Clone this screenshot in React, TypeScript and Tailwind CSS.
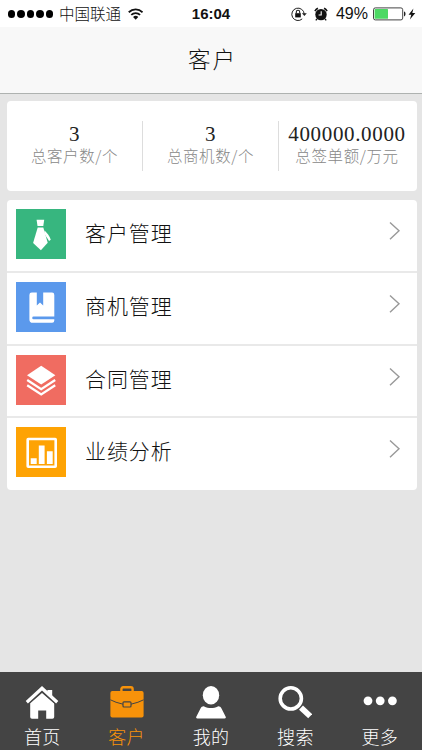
import type { ReactNode } from "react";

const TieIcon = () => (
  <svg viewBox="0 0 50 50" className="size-full" fill="#fff">
    <path d="M20.6 10.7h7.6l-.9 6.4h-5.8z" />
    <path d="M21.7 18.4h5.6l4.4 15.4-6.8 7.5-7.8-7.3z" />
    <path d="M28.6 21.5c2.4 2.4 5 5.5 6.2 9.3l-1.8 1.3c-1.4-3-3.4-4.5-4.8-8.3z" />
  </svg>
);

const BookIcon = () => (
  <svg viewBox="0 0 50 50" className="size-full" fill="#fff">
    <path d="M15.8 10.6h5v12.8l3.2-2.8 3.2 2.8V10.6h8.8a2.3 2.3 0 0 1 2.3 2.3v21.6H17.6a1.4 1.4 0 0 0 0 2.8h20.7v1.3a2.2 2.2 0 0 1-2.2 2.2H16.8a3.4 3.4 0 0 1-3.4-3.4V13a2.4 2.4 0 0 1 2.4-2.4z" />
  </svg>
);

const LayersIcon = () => (
  <svg viewBox="0 0 50 50" className="size-full">
    <path d="M25.2 10.7l14.2 9.5-14.2 9.3L11 20.2z" fill="#fff" />
    <path
      d="M11.2 25l14 9.2 14-9.2M11.2 30.2l14 9.2 14-9.2"
      fill="none"
      stroke="#fff"
      strokeWidth="2.3"
    />
  </svg>
);

const ChartIcon = () => (
  <svg viewBox="0 0 50 50" className="size-full">
    <rect x="11.7" y="12" width="28" height="27.8" rx=".5" fill="none" stroke="#fff" strokeWidth="2.6" />
    <path d="M14.7 31.2h6v5.8h-6zM22.8 18.4h5.8V37h-5.8zM30.9 24.2h5.8V37h-5.8z" fill="#fff" />
  </svg>
);

const HomeIcon = () => (
  <svg viewBox="0 0 34 34" className="size-[34px]">
    <path
      d="M5.2 17.3L17 7l12.2 10.4V31a1.8 1.8 0 0 1-1.8 1.8h-6.2v-8.4h-8v8.4H7A1.8 1.8 0 0 1 5.2 31z"
      fill="#fff"
    />
    <path d="M1.7 16.5L17 2.5l15.3 14" fill="none" stroke="#444" strokeWidth="5.4" />
    <path d="M22.4 4h4.8v7l-4.8-4z" fill="#fff" />
    <path d="M1.8 16.3L17 2.3l15.2 14" fill="none" stroke="#fff" strokeWidth="3.2" />
  </svg>
);

const BriefcaseIcon = () => (
  <svg viewBox="0 0 34 34" className="size-[34px]">
    <path d="M11.4 6V3a1.7 1.7 0 0 1 1.7-1.7h7.8A1.7 1.7 0 0 1 22.6 3v3" fill="none" stroke="#f7920a" strokeWidth="2.4" />
    <rect x=".4" y="5" width="33.2" height="26.6" rx="2" fill="#f7920a" />
    <path d="M.4 13.8q5 2.7 12.6 4.4M33.6 13.8q-5 2.7-12.6 4.4" fill="none" stroke="#444" strokeWidth="1" />
    <rect x="13" y="15.8" width="8" height="5.2" rx="1" fill="#f7920a" stroke="#444" strokeWidth="1.2" />
  </svg>
);

const UserIcon = () => (
  <svg viewBox="0 0 34 34" className="size-[34px]" fill="#fff">
    <ellipse cx="17" cy="9.2" rx="8.2" ry="9.2" />
    <path d="M3.4 32.4c-1.1 0-1.5-.8-1.1-1.7l4.2-8.2c.8-1.4 2.2-2.4 3.7-2.1 2.2 1 4.4 1.5 6.8 1.5s4.6-.5 6.8-1.5c1.5-.3 2.9.7 3.7 2.1l4.2 8.2c.4.9 0 1.7-1.1 1.7z" />
  </svg>
);

const SearchIcon = () => (
  <svg viewBox="0 0 34 34" className="size-[34px]" fill="none" stroke="#fff">
    <circle cx="12.8" cy="12.4" r="10.6" strokeWidth="3.6" />
    <path d="M23 21.6l9.2 8.6" strokeWidth="5.8" />
  </svg>
);

const MoreIcon = () => (
  <svg viewBox="0 0 34 34" className="size-[34px]" fill="#fff">
    <circle cx="5" cy="14.8" r="4.4" />
    <circle cx="17.2" cy="14.8" r="4.4" />
    <circle cx="29.4" cy="14.8" r="4.4" />
  </svg>
);

const WifiIcon = () => (
  <svg viewBox="0 0 16 12" className="ml-[7px] h-3 w-4" fill="none" stroke="#111">
    <path d="M.8 4.2a10.3 10.3 0 0 1 14.4 0" strokeWidth="1.9" />
    <path d="M3.4 7a6.5 6.5 0 0 1 9.2 0" strokeWidth="1.8" />
    <path d="M8 12L5.3 9.2a3.8 3.8 0 0 1 5.4 0z" fill="#111" stroke="none" />
  </svg>
);

const RotationLockIcon = () => (
  <svg viewBox="0 0 16 14" className="h-3.5 w-4" fill="none" stroke="#222">
    <path d="M11.2 11.9A6.2 6.2 0 1 1 13.2 7" strokeWidth="1" />
    <path d="M10.9 6.2h4.9l-2.4 2.8z" fill="#222" stroke="none" />
    <rect x="4.2" y="6.2" width="5.6" height="4.2" fill="#111" stroke="none" />
    <path d="M5.3 6.5V5a1.7 1.7 0 0 1 3.4 0v1.5" strokeWidth="1.1" />
  </svg>
);

const AlarmIcon = () => (
  <svg viewBox="0 0 14 14" className="ml-[7px] size-3.5">
    <circle cx="7" cy="7.6" r="5.7" fill="#111" />
    <path d="M.9 4.1a8 8 0 0 1 3-2.8M13.1 4.1a8 8 0 0 0-3-2.8" fill="none" stroke="#111" strokeWidth="1.6" />
    <path d="M3 11.8l-1.2 1.6M11 11.8l1.2 1.6" stroke="#111" strokeWidth="1.3" />
    <path d="M7.2 4.2v3.8H4.6" fill="none" stroke="#fff" strokeWidth="1.1" />
  </svg>
);

const BatteryIcon = () => (
  <svg viewBox="0 0 44 14" className="ml-[5px] h-3.5 w-11">
    <rect x=".5" y=".9" width="29.2" height="12" rx="1.8" fill="#fff" stroke="#444" />
    <rect x="1.6" y="2" width="13.4" height="9.8" rx=".6" fill="#4cd964" />
    <path d="M31 4.6c2 .4 2 4.4 0 4.8z" fill="#222" />
    <path d="M40.4 1.4l-4.8 6.3h2.7l-1.4 4.8 5.4-6.5h-3z" fill="#111" />
  </svg>
);

const stats = [
  { value: "3", label: "总客户数/个" },
  { value: "3", label: "总商机数/个" },
  { value: "400000.0000", label: "总签单额/万元" },
];

type MenuRowProps = {
  label: string;
  color: string;
  icon: ReactNode;
};

const menu: MenuRowProps[] = [
  { label: "客户管理", color: "bg-[#37b67f]", icon: <TieIcon /> },
  { label: "商机管理", color: "bg-[#5b99ec]", icon: <BookIcon /> },
  { label: "合同管理", color: "bg-[#f06c61]", icon: <LayersIcon /> },
  { label: "业绩分析", color: "bg-[#fea304]", icon: <ChartIcon /> },
];

const tabs = [
  { label: "首页", icon: <HomeIcon /> },
  { label: "客户", icon: <BriefcaseIcon />, active: true },
  { label: "我的", icon: <UserIcon /> },
  { label: "搜索", icon: <SearchIcon /> },
  { label: "更多", icon: <MoreIcon /> },
];

const StatusBar = () => (
  <div className="grid h-[27px] grid-cols-3 items-center bg-white px-2 text-[#111]">
    <div className="flex items-center">
      <div className="flex gap-[2px]">
        {[0, 1, 2, 3, 4].map((dot) => (
          <span key={dot} className="size-[7.4px] rounded-full bg-black" />
        ))}
      </div>
      <span className="ml-1.5 pt-px text-[15.5px] leading-[27px] whitespace-nowrap">中国联通</span>
      <WifiIcon />
    </div>
    <span className="text-center text-[15px] font-bold">16:04</span>
    <div className="-mr-[3px] flex items-center justify-end">
      <RotationLockIcon />
      <AlarmIcon />
      <span className="ml-2 text-base">49%</span>
      <BatteryIcon />
    </div>
  </div>
);

const MenuRow = ({ label, color, icon }: MenuRowProps) => (
  <li className="flex h-[72.8px] border-b-2 border-[#e9e9e9] px-[9px] pt-[9px] last:h-[71.6px] last:border-0">
    <div className={`size-[50px] ${color}`}>{icon}</div>
    <span className="ml-[19px] text-[21px] leading-[50px] tracking-[0.9px] text-[#111]">{label}</span>
    <svg
      viewBox="0 0 12 20"
      className="mt-3 mr-[7px] ml-auto h-5 w-3"
      fill="none"
      stroke="#999"
      strokeWidth="1.4"
    >
      <path d="M1 1.5L10 9.8 1 18.3" />
    </svg>
  </li>
);

const App = () => {
  return (
    <div className="flex h-[750px] w-[422px] flex-col overflow-hidden bg-[#e5e5e5] font-['Liberation_Sans','Noto_Sans_CJK_SC',sans-serif] font-light">
      <StatusBar />
      <header className="h-[67px] border-b border-[#aeb2b0] bg-[#f8f8f8] pt-px pl-[3px] text-center text-[22.5px] leading-[65px] tracking-[2px] text-[#111]">
        客户
      </header>

      <main className="flex flex-1 flex-col gap-[9px] px-[7px] pr-[5px] pt-[7px]">
        <section className="grid h-[90px] grid-cols-[136px_136px_136px] rounded bg-white py-5">
          {stats.map((stat) => (
            <div
              key={stat.label}
              className="flex flex-col items-center border-r border-[#ddd] whitespace-nowrap last:border-0"
            >
              <span className="font-['Liberation_Serif',serif] text-[21px] leading-[26px] font-normal tracking-[0.65px] text-[#222]">
                {stat.value}
              </span>
              <span className="font-['Noto_Sans_CJK_SC',sans-serif] text-[15.5px] leading-4 tracking-[0.6px] text-[#888]">
                {stat.label}
              </span>
            </div>
          ))}
        </section>

        <ul className="rounded bg-white">
          {menu.map((item) => (
            <MenuRow key={item.label} {...item} />
          ))}
        </ul>
      </main>

      <nav className="grid h-[78px] grid-cols-5 bg-[#444] pt-3.5">
        {tabs.map((tab) => (
          <div
            key={tab.label}
            className={`flex flex-col items-center ${tab.active ? "text-[#f7920a]" : "text-white"}`}
          >
            {tab.icon}
            <span className="mt-1.5 text-[18px] leading-[25px] tracking-[0.3px]">{tab.label}</span>
          </div>
        ))}
      </nav>
    </div>
  );
};

export default App;
